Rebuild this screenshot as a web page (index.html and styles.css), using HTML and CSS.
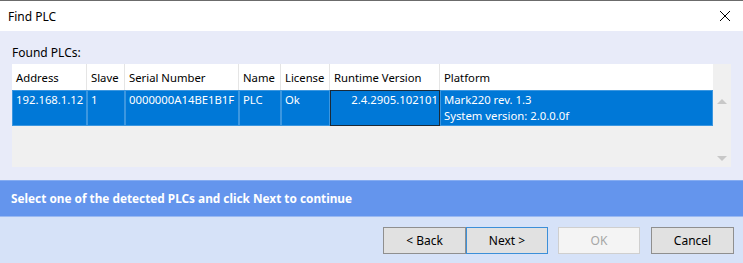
FILE: index.html
```
<!DOCTYPE html>
<html lang="en">
  <head>
    <meta charset="UTF-8" />
    <meta name="viewport" content="width=device-width, initial-scale=1.0" />
    <title>Find PLC</title>
    <link rel="stylesheet" href="styles.css">
  </head>
  <body>
    <div class="window">
      <div class="titlebar">
        <span class="title">Find PLC</span>
        <div class="close">
          <svg width="12" height="12" viewBox="0 0 12 12">
            <path d="M1 1 L11 11 M11 1 L1 11" stroke="#000" stroke-width="1" fill="none" />
          </svg>
        </div>
      </div>
      <div class="content">
        <div class="label">Found PLCs:</div>
        <div class="list">
          <div class="grid">
            <div class="head">Address</div>
            <div class="head">Slave</div>
            <div class="head">Serial Number</div>
            <div class="head">Name</div>
            <div class="head">License</div>
            <div class="head">Runtime Version</div>
            <div class="head last">Platform</div>

            <div class="cell">192.168.1.12</div>
            <div class="cell">1</div>
            <div class="cell">0000000A14BE1B1F</div>
            <div class="cell">PLC</div>
            <div class="cell">Ok</div>
            <div class="cell focus">2.4.2905.102101</div>
            <div class="cell">Mark220 rev. 1.3<br />System version: 2.0.0.0f</div>
          </div>
          <div class="scroll">
            <span class="arrow up"></span>
            <span class="arrow down"></span>
          </div>
        </div>
      </div>
      <div class="banner">Select one of the detected PLCs and click Next to continue</div>
      <div class="footer">
        <button class="btn">&lt; Back</button>
        <button class="btn default">Next &gt;</button>
        <button class="btn disabled">OK</button>
        <button class="btn">Cancel</button>
      </div>
    </div>
  </body>
</html>
```

FILE: styles.css
```
body {
  margin: 0;
  font-family: "Noto Sans", "Open Sans", sans-serif;
  font-size: 11.3px;
  color: #000;
}
.window {
  width: 743px;
  height: 263px;
  border-top: 1px solid #6b6b6b;
  box-sizing: border-box;
  display: flex;
  flex-direction: column;
  overflow: hidden;
}
.titlebar {
  height: 30px;
  background-color: #fff;
  display: flex;
  align-items: center;
  justify-content: space-between;
  padding: 0 12px 0 8px;
  font-size: 12px;
}
.close {
  display: flex;
}
.content {
  background-color: #e8ebf9;
  padding: 13px 12px 13px 12px;
  height: 149px;
  box-sizing: border-box;
}
.label {
  height: 20px;
  line-height: 18px;
  font-size: 12px;
}
.list {
  display: flex;
  width: 719px;
  height: 103px;
  background-color: #f0f0f0;
}
.grid {
  width: 701px;
  display: grid;
  grid-template-columns: 75px 38px 114px 42px 49px 110px 273px;
  grid-template-rows: 26px 36px;
  align-content: start;
}
.head {
  background-color: #fff;
  border-right: 1px solid #e5e5e5;
  padding: 1px 4px 0;
  line-height: 25px;
  white-space: nowrap;
  overflow: hidden;
}
.head.last {
  border-right: none;
}
.cell {
  background-color: #0078d7;
  color: #fff;
  border: 1px solid #3c97e0;
  padding: 1px 3px;
  line-height: 16px;
  white-space: nowrap;
  overflow: hidden;
}
.cell.focus {
  border-color: #1b2a38;
  text-align: right;
  padding-right: 1px;
}
.scroll {
  width: 18px;
  display: flex;
  flex-direction: column;
  justify-content: space-between;
  align-items: center;
  padding: 35px 0 6px;
}
.arrow {
  width: 0;
  height: 0;
  border-left: 5px solid transparent;
  border-right: 5px solid transparent;
}
.arrow.up {
  border-bottom: 5px solid #c8c8c8;
}
.arrow.down {
  border-top: 5px solid #c8c8c8;
}
.banner {
  height: 37px;
  box-sizing: border-box;
  background-color: #6495ed;
  border-top: 1px solid #85acf1;
  border-bottom: 1px solid #9ab9f2;
  color: #fff;
  font-weight: bold;
  padding-left: 11px;
  line-height: 35px;
  font-size: 11.8px;
}
.footer {
  flex: 1;
  background-color: #d6e2f8;
  display: flex;
  justify-content: flex-end;
  align-items: flex-start;
  padding: 10px 9px 0 0;
}
.btn {
  width: 83px;
  height: 27px;
  font-family: inherit;
  font-size: 12px;
  background-color: #e1e1e1;
  border: 1px solid #8f8f8f;
  color: #000;
  padding: 0;
}
.btn.default {
  border-color: #3c8fd8;
  width: 82px;
  margin-right: 10px;
}
.btn.disabled {
  background-color: #f4f4f4;
  border-color: #cfcfcf;
  color: #a6a6a6;
  width: 82px;
  margin-right: 11px;
}
```
